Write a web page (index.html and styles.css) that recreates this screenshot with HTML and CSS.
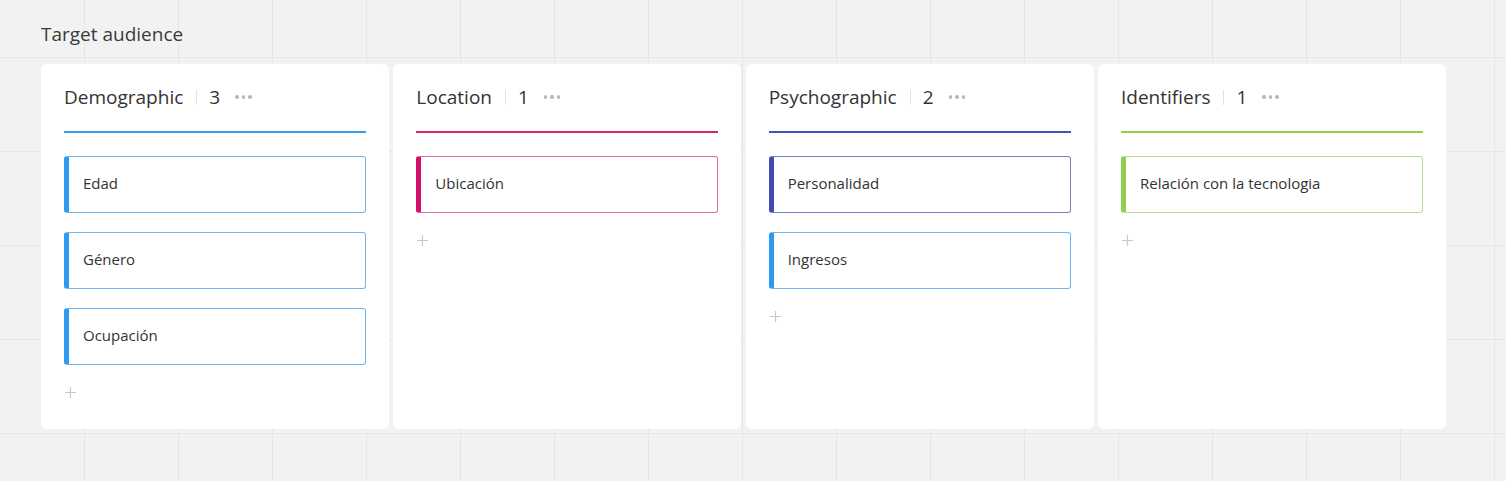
FILE: index.html
```html
<!DOCTYPE html>
<html lang="en">
<head>
<meta charset="utf-8">
<title>Target audience</title>
<link rel="stylesheet" href="styles.css">
</head>
<body>
<div class="board">
  <h1 class="board-title">Target audience</h1>
  <div class="columns">
    <section class="column blue">
      <header class="col-head">
        <span class="col-name">Demographic</span>
        <span class="sep"></span>
        <span class="count">3</span>
        <span class="dots"><i></i><i></i><i></i></span>
      </header>
      <div class="cards">
        <div class="card blue">Edad</div>
        <div class="card blue">Género</div>
        <div class="card blue">Ocupación</div>
      </div>
      <div class="add"><svg width="11" height="11" viewBox="0 0 11 11"><path d="M5.5 0V11M0 5.5H11" stroke="#c8c8c8" stroke-width="1.2"/></svg></div>
    </section>
    <section class="column pink">
      <header class="col-head">
        <span class="col-name">Location</span>
        <span class="sep"></span>
        <span class="count">1</span>
        <span class="dots"><i></i><i></i><i></i></span>
      </header>
      <div class="cards">
        <div class="card pink">Ubicación</div>
      </div>
      <div class="add"><svg width="11" height="11" viewBox="0 0 11 11"><path d="M5.5 0V11M0 5.5H11" stroke="#c8c8c8" stroke-width="1.2"/></svg></div>
    </section>
    <section class="column indigo">
      <header class="col-head">
        <span class="col-name">Psychographic</span>
        <span class="sep"></span>
        <span class="count">2</span>
        <span class="dots"><i></i><i></i><i></i></span>
      </header>
      <div class="cards">
        <div class="card indigo">Personalidad</div>
        <div class="card blue">Ingresos</div>
      </div>
      <div class="add"><svg width="11" height="11" viewBox="0 0 11 11"><path d="M5.5 0V11M0 5.5H11" stroke="#c8c8c8" stroke-width="1.2"/></svg></div>
    </section>
    <section class="column green">
      <header class="col-head">
        <span class="col-name">Identifiers</span>
        <span class="sep"></span>
        <span class="count">1</span>
        <span class="dots"><i></i><i></i><i></i></span>
      </header>
      <div class="cards">
        <div class="card green">Relación con la tecnologia</div>
      </div>
      <div class="add"><svg width="11" height="11" viewBox="0 0 11 11"><path d="M5.5 0V11M0 5.5H11" stroke="#c8c8c8" stroke-width="1.2"/></svg></div>
    </section>
  </div>
</div>
</body>
</html>
```

FILE: styles.css
```css
html, body {
  margin: 0;
  padding: 0;
}

body {
  width: 1506px;
  height: 481px;
  overflow: hidden;
  font-family: "Open Sans", "Liberation Sans", sans-serif;
  color: #333;
  background-color: #f2f2f2;
  background-image:
    linear-gradient(to right, #e6e6e6 1px, transparent 1px),
    linear-gradient(to bottom, #e6e6e6 1px, transparent 1px);
  background-size: 94px 94px;
  background-position: 84px 57px;
}

.board {
  padding: 21px 0 0 41px;
}

.board-title {
  margin: 0;
  font-size: 19px;
  font-weight: 400;
  line-height: 26px;
  color: #3a3a3a;
}

.columns {
  margin-top: 17px;
  display: flex;
  gap: 4.33px;
}

.column {
  width: 348px;
  height: 365px;
  box-sizing: border-box;
  background: #fff;
  border-radius: 6px;
  padding: 20px 23px 0 23px;
}

.column.blue { --c: #3d9be9; }
.column.pink { --c: #d6246e; }
.column.indigo { --c: #4a4fb3; }
.column.green { --c: #8fd14f; }

.col-head {
  display: flex;
  align-items: center;
  height: 26px;
  padding-bottom: 21px;
  border-bottom: 2px solid var(--c);
}

.col-name {
  font-size: 19px;
  line-height: 26px;
  color: #333;
}

.sep {
  width: 1px;
  height: 15px;
  background: #e2e2e2;
  margin: 0 12px 0 13px;
}

.count {
  font-size: 19px;
  line-height: 26px;
  color: #333;
}

.dots {
  display: flex;
  gap: 3px;
  margin-left: 15px;
}

.dots i {
  width: 3.5px;
  height: 3.5px;
  border-radius: 50%;
  background: #b8b8b8;
}

.cards {
  margin-top: 23px;
  display: flex;
  flex-direction: column;
  gap: 19px;
}

.card {
  height: 57px;
  box-sizing: border-box;
  border: 1px solid var(--b);
  border-left: 5px solid var(--c);
  border-radius: 3px;
  padding: 0 0 3px 14px;
  display: flex;
  align-items: center;
  font-size: 15px;
  color: #333;
  background: #fff;
}

.card.blue { --c: #2d9bf0; --b: #6fb6f0; }
.card.pink { --c: #d5106a; --b: #df6fa0; }
.card.indigo { --c: #414bb2; --b: #7a7fc4; }
.card.green { --c: #8fd14f; --b: #b6e08e; }

.add {
  margin-top: 22px;
  padding-left: 1px;
  height: 11px;
  display: flex;
}
```
